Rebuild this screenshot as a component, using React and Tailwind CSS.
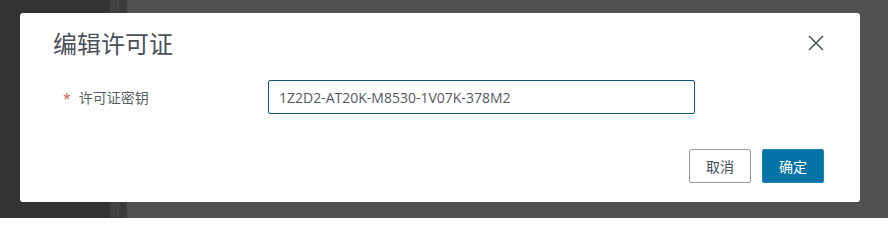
import React from "react";

export default function App() {
  const font = { fontFamily: '"Open Sans", "Noto Sans CJK SC", sans-serif' };
  return (
    <div className="relative w-[888px] h-[218px] overflow-hidden flex" style={font}>
      <div className="w-[110px] h-full bg-[#323335]" />
      <div className="w-[17px] h-full bg-[#3b3b3c] flex">
        <div className="w-[8px] h-full bg-[#414142]" />
        <div className="w-[1px] h-full bg-[#4a4a4a]" />
      </div>
      <div className="flex-1 h-full bg-[#515151]" />

      <div className="absolute left-[20px] top-[13px] w-[840px] h-[189px] bg-white rounded-[3px] flex flex-col">
        <div className="flex items-center justify-between pl-[33px] pr-[35px] pt-[14px] h-[48px]">
          <div className="text-[24px] leading-[32px] text-[#4b5059]">编辑许可证</div>
          <svg width="18" height="18" viewBox="0 0 18 18" className="mt-[-2px]">
            <path d="M2 2 L16 16 M16 2 L2 16" stroke="#4f5660" strokeWidth="1.6" fill="none" />
          </svg>
        </div>
        <div className="flex items-center mt-[19px] pl-[43px]">
          <div className="w-[205px] flex items-center text-[14px] text-[#5a5f66]">
            <span className="text-[#d9534f] mr-[8px] mt-[3px]">*</span>
            <span>许可证密钥</span>
          </div>
          <div className="w-[427px] h-[34px] border border-[#0f5874] rounded-[2px] flex items-center px-[10px] text-[14px] text-[#555a61]">
            1Z2D2-AT20K-M8530-1V07K-378M2
          </div>
        </div>
        <div className="flex justify-end gap-[11px] pr-[36px] mt-[35px]">
          <button className="w-[62px] h-[34px] border border-[#9a9a9a] rounded-[2px] bg-white text-[14px] text-[#4a4f57]">
            取消
          </button>
          <button className="w-[62px] h-[34px] border border-[#1a86b8] rounded-[2px] bg-[#0373a6] text-[14px] text-white">
            确定
          </button>
        </div>
      </div>
    </div>
  );
}
